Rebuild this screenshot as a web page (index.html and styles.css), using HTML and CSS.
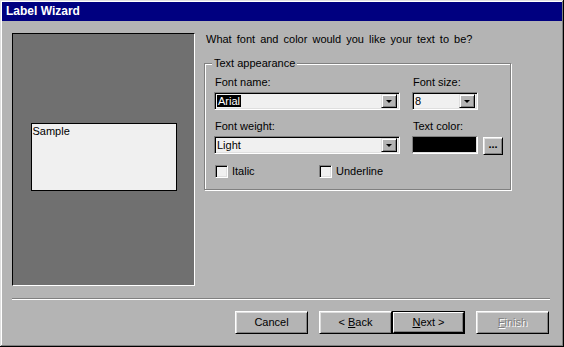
FILE: index.html
```html
<!DOCTYPE html>
<html lang="en">

<head>
    <meta charset="UTF-8">
    <title>Label Wizard</title>
    <link rel="stylesheet" href="styles.css">
</head>

<body>
    <div class="window">
        <div class="titlebar">Label Wizard</div>
        <div class="main">
            <div class="preview">
                <div class="sample">Sample</div>
            </div>
            <div class="options">
                <p class="question">What font and color would you like your text to be?</p>
                <div class="group">
                    <span class="legend">Text appearance</span>
                    <div class="fields">
                        <div class="field">
                            <label>Font name:</label>
                            <div class="combo">
                                <span class="value"><span class="selected">Arial</span></span>
                                <span class="drop"></span>
                            </div>
                        </div>
                        <div class="field">
                            <label>Font size:</label>
                            <div class="combo small">
                                <span class="value">8</span>
                                <span class="drop"></span>
                            </div>
                        </div>
                        <div class="field">
                            <label>Font weight:</label>
                            <div class="combo">
                                <span class="value">Light</span>
                                <span class="drop"></span>
                            </div>
                        </div>
                        <div class="field">
                            <label>Text color:</label>
                            <div class="color-row">
                                <span class="swatch"></span>
                                <span class="btn dots">...</span>
                            </div>
                        </div>
                    </div>
                    <div class="checks">
                        <div class="check"><span class="box"></span>Italic</div>
                        <div class="check"><span class="box"></span>Underline</div>
                    </div>
                </div>
            </div>
        </div>
        <div class="separator"></div>
        <div class="buttons">
            <span class="btn"><span>Cancel</span></span>
            <span class="btn back"><span>&lt; <u>B</u>ack</span></span>
            <span class="btn default">
                <span><span><u>N</u>ext &gt;</span></span>
            </span>
            <span class="btn disabled"><span><u>F</u>inish</span></span>
        </div>
    </div>
</body>

</html>
```

FILE: styles.css
```css
* {
    margin: 0;
    padding: 0;
    box-sizing: border-box;
}

body {
    background: #b4b4b4;
    font-family: "Liberation Sans", Arial, sans-serif;
    font-size: 11px;
    color: #000;
}

.window {
    width: 564px;
    height: 347px;
    padding: 2px;
    background: #b4b4b4;
    box-shadow: inset -1px -1px 0 #000, inset 1px 1px 0 #dfdfdf,
        inset -2px -2px 0 #808080, inset 2px 2px 0 #fff;
    display: flex;
    flex-direction: column;
}

.titlebar {
    height: 19px;
    background: #000080;
    color: #fff;
    font-weight: bold;
    font-size: 12px;
    line-height: 19px;
    padding-left: 4px;
}

.main {
    display: flex;
    padding: 12px 0 0 10px;
}

/* preview on the left */
.preview {
    width: 183px;
    height: 253px;
    margin-right: 9px;
    background: #707070;
    border: 1px solid;
    border-color: #000 #fff #fff #000;
    display: flex;
    justify-content: center;
    align-items: center;
    padding-bottom: 5px;
}

.sample {
    width: 146px;
    height: 68px;
    background: #f0f0f0;
    border: 1px solid #000;
    padding: 1px 1px;
    line-height: 13px;
}

.question {
    line-height: 13px;
    margin: 0 0 17px 2px;
    word-spacing: 2px;
}

.group {
    position: relative;
    width: 307px;
    border: 1px solid #808080;
    box-shadow: inset 1px 1px 0 #fff, 1px 1px 0 #fff;
    padding: 12px 0 11px 9px;
}

.legend {
    position: absolute;
    top: -7px;
    left: 7px;
    padding: 0 2px;
    background: #b4b4b4;
    line-height: 13px;
}

.fields {
    display: grid;
    grid-template-columns: 186px 91px;
    column-gap: 12px;
    row-gap: 10px;
}

.field label {
    display: block;
    line-height: 13px;
    margin-bottom: 3px;
    padding-left: 1px;
}

.combo {
    height: 18px;
    display: flex;
    align-items: center;
    justify-content: space-between;
    background: #f0f0f0;
    border: 1px solid;
    border-color: #808080 #fff #fff #808080;
    box-shadow: inset 1px 1px 0 #000, inset -1px -1px 0 #dfdfdf;
    padding: 2px 2px 2px 2px;
}

.combo.small {
    width: 66px;
}

.value {
    line-height: 12px;
    padding-left: 0;
}

.selected {
    background: #000;
    color: #fff;
    padding: 0 1px;
    display: inline-block;
}

.drop {
    width: 16px;
    height: 14px;
    background: #b4b4b4;
    border: 1px solid;
    border-color: #dfdfdf #000 #000 #dfdfdf;
    box-shadow: inset 1px 1px 0 #fff, inset -1px -1px 0 #808080;
    position: relative;
}

.drop::after {
    content: "";
    position: absolute;
    left: 4px;
    top: 5px;
    border-left: 3px solid transparent;
    border-right: 3px solid transparent;
    border-top: 3px solid #000;
}

.color-row {
    display: flex;
    align-items: flex-start;
    gap: 5px;
}

.swatch {
    width: 66px;
    height: 18px;
    background: #000;
    border: 1px solid;
    border-color: #808080 #fff #fff #808080;
    box-shadow: inset -1px -1px 0 #dfdfdf;
}

.checks {
    display: flex;
    margin-top: 10px;
}

.check {
    width: 104px;
    display: flex;
    align-items: center;
    gap: 4px;
    line-height: 13px;
    padding-left: 1px;
}

.box {
    width: 13px;
    height: 13px;
    background: #f0f0f0;
    border: 1px solid;
    border-color: #808080 #fff #fff #808080;
    box-shadow: inset 1px 1px 0 #000, inset -1px -1px 0 #dfdfdf;
}

.separator {
    height: 2px;
    margin: 12px 12px 0 10px;
    border-top: 1px solid #808080;
    border-bottom: 1px solid #fff;
}

/* buttons */
.buttons {
    display: flex;
    justify-content: flex-end;
    padding: 11px 13px 0 0;
}

.btn {
    width: 73px;
    height: 23px;
    display: flex;
    align-items: center;
    justify-content: center;
    background: #b4b4b4;
    border: 1px solid;
    border-color: #fff #000 #000 #fff;
    box-shadow: inset 1px 1px 0 #dfdfdf, inset -1px -1px 0 #808080;
    margin-left: 11px;
    line-height: 13px;
}

.btn.back {
    margin-left: 11px;
}

.btn.default {
    margin-left: 0;
    border: 1px solid #000;
    box-shadow: none;
    padding: 0;
}

.btn.default > span {
    width: 100%;
    height: 100%;
    display: flex;
    align-items: center;
    justify-content: center;
    border: 1px solid;
    border-color: #fff #000 #000 #fff;
    box-shadow: inset -1px -1px 0 #808080;
}

.btn.disabled {
    color: #808080;
    text-shadow: 1px 1px 0 #fff;
}

.btn.dots {
    width: 20px;
    height: 18px;
    margin: 1px 0 0 0;
    font-weight: bold;
    padding-bottom: 4px;
}
```
